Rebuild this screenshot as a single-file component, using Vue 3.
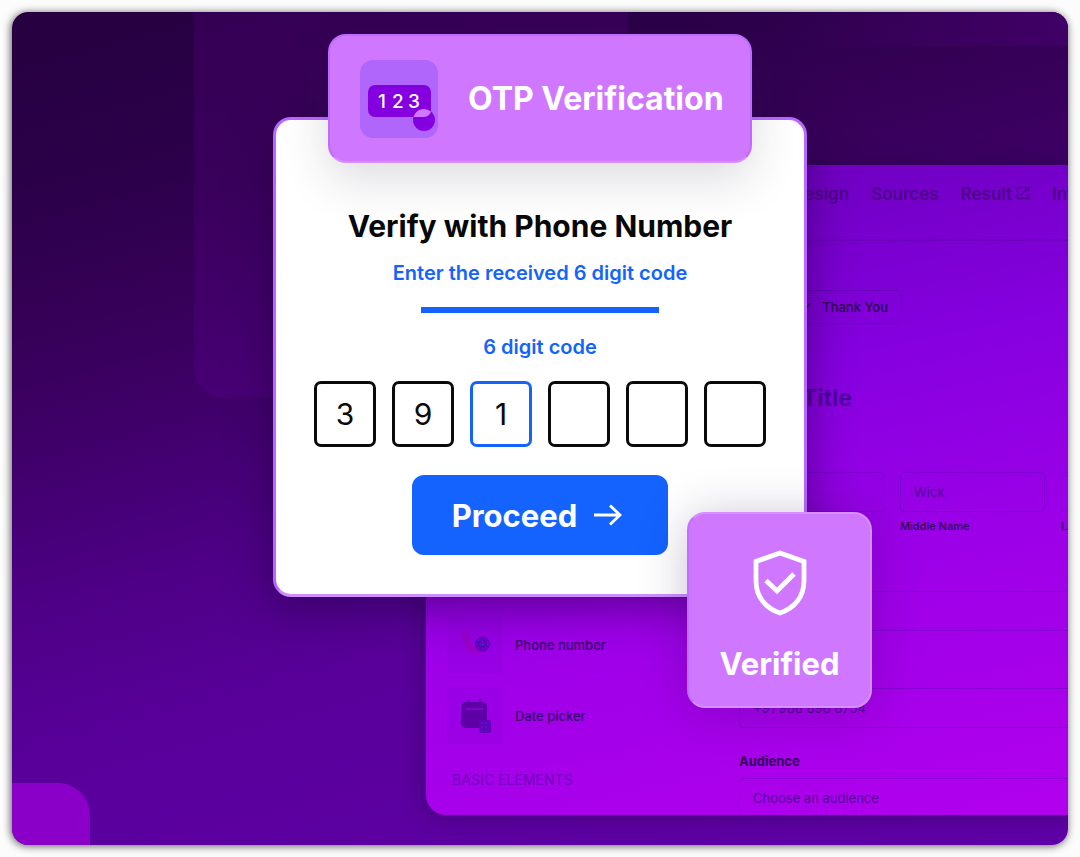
<script setup>
import { ref } from 'vue'

const digits = ref(['3', '9', '1', '', '', ''])
const activeDigit = 2
</script>

<template>
  <main class="stage">
    <div class="shape shape-top"></div>
    <div class="shape shape-right"></div>
    <div class="shape shape-corner"></div>

    <section class="builder" aria-label="Form builder">
      <nav class="tabs">
        <a href="#">Design</a>
        <a href="#">Sources</a>
        <a href="#">Result
          <svg width="14" height="14" viewBox="0 0 14 14" fill="none" stroke="currentColor" stroke-width="1.4">
            <path d="M6 1.5H1.5v11h11V8M8.5 1.5h4v4M12.5 1.5L5 9" />
          </svg>
        </a>
        <a href="#">Integrations</a>
      </nav>
      <div class="builder-body">
        <aside class="sidebar">
          <div class="element">
            <span class="element-icon">
              <svg width="32" height="32" viewBox="0 0 32 32">
                <path d="M2 7c0-3 2-5 4.500-5 2 0 4 1.500 4.500 3.500s-.5 3-1.500 4c1 3 4 6 7 8l5 1c1 4-1 7-5 7C8 24 2.500 14 2 7z" fill="#a000a8" opacity=".4" />
                <circle cx="23.500" cy="15" r="7.500" fill="#5a00b4" opacity=".75" />
                <circle cx="23.500" cy="15" r="5.500" fill="none" stroke="#1468e8" stroke-dasharray="1 3" opacity=".8" />
                <path d="M21 15h5M23.500 12v6" stroke="#1468e8" stroke-dasharray="1 2" opacity=".7" />
              </svg>
            </span>
            Phone number
          </div>
          <div class="element">
            <span class="element-icon">
              <svg width="32" height="34" viewBox="0 0 32 34">
                <path d="M9.500 0v5M21 0v5" stroke="#5e00a6" stroke-width="2" />
                <rect x="2" y="3" width="26" height="26" rx="5" fill="#5e00a6" />
                <path d="M6.500 10h18" stroke="#8c00d8" stroke-width="1.500" />
                <rect x="20" y="21" width="12" height="13" rx="2" fill="#6500bb" />
                <path d="M22.500 24h8M22.500 28h8M22.500 32h8" stroke="#1468e8" stroke-dasharray="1 3" opacity=".8" />
              </svg>
            </span>
            Date picker
          </div>
          <h3 class="group">BASIC ELEMENTS</h3>
        </aside>
        <div class="form">
          <div class="pill">
            <svg width="14" height="14" viewBox="0 0 14 14" fill="none" stroke="currentColor" stroke-width="1.800"><path d="M1 7.500l4 4L12.500 3" /></svg>
            Thank You
          </div>
          <h2 class="form-title">Form Title</h2>
          <div class="names">
            <label class="name"><input class="field" type="text" /><span>First Name</span></label>
            <label class="name"><input class="field" type="text" value="Wick" /><span>Middle Name</span></label>
            <label class="name"><input class="field" type="text" /><span>Last Name</span></label>
          </div>
          <input class="field email" type="email" aria-label="Email" />
          <input class="field phone" type="tel" aria-label="Phone" value="+91 986 896 8754" />
          <label class="audience-label" for="audience">Audience</label>
          <select id="audience" class="field"><option>Choose an audience</option></select>
        </div>
      </div>
    </section>

    <div class="dialog">
      <header class="banner">
        <svg class="banner-icon" width="78" height="78" viewBox="0 0 78 78">
          <defs><clipPath id="chip"><rect x="8" y="25" width="63" height="32" rx="7" /></clipPath></defs>
          <rect width="78" height="78" rx="13" fill="#b066fb" />
          <rect x="8" y="25" width="63" height="32" rx="7" fill="#8400df" />
          <circle cx="64" cy="60" r="11" fill="#8400df" />
          <circle cx="64" cy="60" r="11" fill="#cf78ff" clip-path="url(#chip)" />
          <text x="18" y="48" class="chip-text">1</text>
          <text x="32" y="48" class="chip-text">2</text>
          <text x="48" y="48" class="chip-text">3</text>
        </svg>
        <h1>OTP Verification</h1>
      </header>

      <form class="otp" @submit.prevent>
        <h2>Verify with Phone Number</h2>
        <p class="hint">Enter the received 6 digit code</p>
        <hr />
        <p id="code-label" class="hint">6 digit code</p>
        <div class="digits" role="group" aria-labelledby="code-label">
          <input
            v-for="(digit, i) in digits"
            :key="i"
            v-model="digits[i]"
            :class="{ active: i === activeDigit }"
            type="text"
            inputmode="numeric"
            maxlength="1"
            :aria-label="`Digit ${i + 1}`"
          />
        </div>
        <button type="submit">
          Proceed
          <svg width="28" height="22" viewBox="0 0 28 22" fill="none" stroke="currentColor" stroke-width="2.800">
            <path d="M0 11h26M16 1.500L26 11L16 20.500" />
          </svg>
        </button>
      </form>

      <div class="verified">
        <svg width="54" height="66" viewBox="0 0 54 66" fill="none" stroke="#fff" stroke-width="4.800">
          <path d="M27 3L51 11.500V31C51 47 41 58.500 27 63C13 58.500 3 47 3 31V11.500Z" />
          <path d="M13 30.500L24 41L41 24" />
        </svg>
        <strong>Verified</strong>
      </div>
    </div>
  </main>
</template>

<style>
body {
  background: #fcfcfc;
}
</style>

<style scoped>
* {
  box-sizing: border-box;
}

.stage {
  position: relative;
  display: flex;
  justify-content: center;
  align-items: flex-start;
  margin: 12px;
  min-height: calc(100vh - 24px);
  overflow: hidden;
  border-radius: 16px;
  background: linear-gradient(165deg, #260040 0%, #2b0049 16%, #370059 30%, #3e0066 38%, #4e0086 54%, #59009b 68%, #6000a8 100%);
  box-shadow: -1px 1px 8px rgba(0, 0, 0, 0.65);
  font-family: Inter, "Liberation Sans", sans-serif;
}

h1,
h2,
h3,
p {
  margin: 0;
}

.shape {
  position: absolute;
}

.shape-top {
  top: 0;
  left: calc(50% - 346px);
  width: 434px;
  height: 386px;
  border-radius: 0 0 32px 32px;
  background: linear-gradient(170deg, #340054 0%, #3a005c 40%, #4d007e 100%);
}

.shape-right {
  top: 0;
  right: 0;
  width: 280px;
  height: 34px;
  border-radius: 0 0 0 32px;
  background: linear-gradient(90deg, rgba(66, 0, 104, 0), #400066);
}

.shape-corner {
  bottom: 0;
  left: 0;
  width: 78px;
  height: 62px;
  border-radius: 0 32px 0 0;
  background: #8b00c9;
}

.builder {
  position: absolute;
  top: 153px;
  left: calc(50% - 114px);
  right: 0;
  height: 650px;
  overflow: hidden;
  border-radius: 20px 0 0 20px;
  background: linear-gradient(168deg, #6a00b6 0%, #7400c8 16%, #8600e0 36%, #9c00e8 62%, #b200ee 100%);
  box-shadow: 0 0 24px rgba(30, 0, 60, 0.45);
}

.tabs {
  display: flex;
  gap: 22px;
  height: 76px;
  padding: 17px 0 0 366px;
  border-bottom: 2px solid rgba(80, 0, 150, 0.3);
}

.tabs a {
  display: flex;
  flex: none;
  gap: 4px;
  color: #4f008c;
  font-size: 17px;
  font-weight: 600;
  line-height: 24px;
  text-decoration: none;
}

.tabs svg {
  margin-top: 4px;
}

.builder-body {
  display: grid;
  grid-template-columns: 272px 468px;
}

.sidebar {
  padding: 375px 32px 0 21px;
}

.element {
  display: flex;
  align-items: center;
  gap: 12px;
  height: 57px;
  margin-bottom: 14px;
  color: #3a0070;
  font-size: 13px;
  font-weight: 500;
}

.element-icon {
  display: grid;
  place-items: center;
  width: 56px;
  height: 57px;
  border-radius: 4px;
  background: rgba(130, 0, 215, 0.22);
}

.group {
  padding-left: 5px;
  margin-top: 24px;
  color: #7800c0;
  font-size: 14px;
  font-weight: 500;
  line-height: 24px;
}

.form {
  padding: 49px 0 0 41px;
  width: 508px;
}

.pill {
  display: flex;
  align-items: center;
  justify-content: flex-end;
  gap: 10px;
  width: 163px;
  height: 34px;
  padding-right: 13px;
  border: 1px solid rgba(70, 0, 140, 0.35);
  border-radius: 4px;
  color: #2a0050;
  font-size: 13px;
  font-weight: 500;
}

.form-title {
  margin-top: 60px;
  color: #5200a0;
  font-size: 23px;
  font-weight: 700;
  line-height: 28px;
}

.names {
  display: grid;
  grid-template-columns: repeat(3, 1fr);
  gap: 16px;
  margin-top: 60px;
}

.name {
  color: #2e0058;
  font-size: 11px;
  font-weight: 500;
  line-height: 16px;
}

.name span {
  display: block;
  margin-top: 6px;
}

.field {
  display: block;
  width: 100%;
  height: 40px;
  padding: 0 13px;
  border: 1px solid rgba(90, 0, 180, 0.4);
  border-radius: 4px;
  outline: 0;
  appearance: none;
  background: transparent;
  color: #54009a;
  font: 400 13px Inter, "Liberation Sans", sans-serif;
}

.email {
  margin-top: 57px;
}

.phone {
  margin-top: 57px;
}

.audience-label {
  display: block;
  margin: 24px 0 8px;
  color: #30005c;
  font-size: 13px;
  font-weight: 700;
  line-height: 18px;
}

.dialog {
  position: relative;
  width: 534px;
  margin-top: 105px;
}

.otp {
  display: flex;
  flex-direction: column;
  align-items: center;
  height: 480px;
  padding: 88px 37px 39px;
  border: 3px solid #b868ff;
  border-bottom-color: #cf8eff;
  border-radius: 18px;
  background: #fff;
  box-shadow: 0 10px 44px rgba(30, 0, 60, 0.5);
}

.otp h2 {
  color: #080808;
  font-size: 30px;
  font-weight: 700;
  line-height: 36px;
  white-space: nowrap;
}

.hint {
  color: #1463ff;
  font-size: 20px;
  font-weight: 600;
  line-height: 28px;
}

.otp h2 + .hint {
  margin-top: 15px;
}

hr {
  width: 238px;
  height: 6px;
  margin: 20px 0;
  border: 0;
  background: #1463ff;
}

.digits {
  display: flex;
  gap: 16px;
  margin-top: 20px;
}

.digits input {
  width: 62px;
  height: 66px;
  padding: 0;
  border: 3px solid #0a0a0a;
  border-radius: 7px;
  outline: 0;
  background: transparent;
  color: #0a0a0a;
  font: 400 30px Inter, "Liberation Sans", sans-serif;
  text-align: center;
}

.digits .active {
  border-color: #1463ff;
}

button {
  display: flex;
  align-items: center;
  justify-content: center;
  gap: 17px;
  width: 256px;
  height: 80px;
  flex: none;
  margin-top: 28px;
  padding: 0 6px 0 0;
  border: 0;
  border-radius: 12px;
  background: #1463ff;
  color: #fff;
  font: 700 31px Inter, "Liberation Sans", sans-serif;
}

.banner {
  position: absolute;
  top: -83px;
  left: 55px;
  display: flex;
  align-items: center;
  gap: 30px;
  width: 424px;
  height: 129px;
  padding-left: 30px;
  border: 2px solid #bd6cff;
  border-bottom-color: #d48fff;
  border-radius: 18px;
  background: #cf78ff;
  box-shadow: 0 16px 48px rgba(40, 40, 60, 0.16);
}

.banner h1 {
  color: #fff;
  font-size: 32px;
  font-weight: 700;
  line-height: 40px;
  white-space: nowrap;
}

.banner-icon {
  flex: none;
}

.chip-text {
  fill: #fff;
  font-size: 19px;
  font-weight: 500;
}

.verified {
  position: absolute;
  right: -65px;
  bottom: -111px;
  display: flex;
  flex-direction: column;
  align-items: center;
  gap: 28px;
  width: 185px;
  height: 196px;
  padding-top: 36px;
  border: 2px solid #d68fff;
  border-left-color: #bd70ff;
  border-radius: 18px;
  background: #cf78ff;
  box-shadow: 0 4px 48px rgba(40, 20, 80, 0.25);
}

.verified strong {
  color: #fff;
  font-size: 31px;
  font-weight: 700;
  line-height: 40px;
}
</style>
